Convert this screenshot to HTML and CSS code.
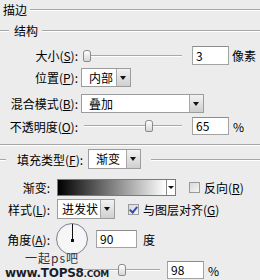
FILE: index.html
```html
<!DOCTYPE html>
<html>
<head>
  <meta charset="UTF-8">
  <title>描边</title>
  <link rel="stylesheet" href="styles.css">
</head>
<body>
  <div class="panel">
    <div class="legend top"><span>描边</span></div>
    <div class="legend sub"><span>结构</span></div>

    <div class="row r-size">
      <span class="lbl">大小(<u>S</u>):</span>
      <div class="slider"><div class="track"></div><div class="thumb" style="left: 1px"></div></div>
      <div class="field">3</div>
      <span class="unit">像素</span>
    </div>

    <div class="row r-pos">
      <span class="lbl">位置(<u>P</u>):</span>
      <div class="select w-pos"><div class="value">内部</div><div class="arrow"></div></div>
    </div>

    <div class="row r-blend">
      <span class="lbl">混合模式(<u>B</u>):</span>
      <div class="select w-blend"><div class="value">叠加</div><div class="arrow"></div></div>
    </div>

    <div class="row r-opacity">
      <span class="lbl">不透明度(<u>O</u>):</span>
      <div class="slider"><div class="track"></div><div class="thumb" style="left: 63px"></div></div>
      <div class="field">65</div>
      <span class="unit pct">%</span>
    </div>

    <div class="sep"></div>

    <div class="legend fill">
      <span class="fill-lbl">填充类型(<u>F</u>):</span>
      <div class="select w-fill"><div class="value">渐变</div><div class="arrow"></div></div>
    </div>

    <div class="row r-grad">
      <span class="lbl2">渐变:</span>
      <div class="gradient"><div class="ramp"></div><div class="mini-arrow"></div></div>
      <span class="check"></span>
      <span class="check-lbl">反向(<u>R</u>)</span>
    </div>

    <div class="row r-style">
      <span class="lbl2">样式(<u>L</u>):</span>
      <div class="select w-style"><div class="value">进发状</div><div class="arrow"></div></div>
      <span class="check on"></span>
      <span class="check-lbl">与图层对齐(<u>G</u>)</span>
    </div>

    <div class="row r-angle">
      <span class="lbl2">角度(<u>A</u>):</span>
      <div class="dial"><div class="hand"></div><div class="dot"></div></div>
      <div class="field w-angle">90</div>
      <span class="unit deg">度</span>
    </div>

    <div class="row r-scale">
      <span class="lbl2"></span>
      <div class="slider short"><div class="track"></div><div class="thumb" style="left: 61px"></div></div>
      <div class="field">98</div>
      <span class="unit pct">%</span>
    </div>

    <div class="mark-cn">一起ps吧</div>
    <div class="mark-en">www.TOPS8<span>.COM</span></div>
  </div>
</body>
</html>
```

FILE: styles.css
```css
body {
  margin: 0;
  background: #ececec;
  font-family: "Noto Sans CJK SC", "DejaVu Sans", sans-serif;
  font-size: 12px;
  color: #000;
}
.panel {
  position: relative;
  width: 260px;
  height: 280px;
  overflow: hidden;
}
u {
  text-decoration: underline;
  text-underline-offset: 1px;
}

/* group headers with etched lines */
.legend {
  display: flex;
  align-items: center;
}
.legend::after {
  content: "";
  flex: 1;
  height: 1px;
  background: #a6a6a6;
  box-shadow: 0 1px 0 #fff;
}
.legend.top {
  height: 18px;
  padding-left: 3px;
}
.legend.top span {
  margin-right: 3px;
}
.legend.sub {
  height: 24px;
}
.legend.sub::before,
.legend.fill::before {
  content: "";
  width: 9px;
  height: 1px;
  background: #a6a6a6;
  box-shadow: 0 1px 0 #fff;
  margin-right: 5px;
}
.legend.sub span {
  margin-right: 4px;
}

.row {
  display: flex;
  align-items: center;
}
.lbl {
  width: 78px;
  text-align: right;
  margin-right: 3px;
  white-space: nowrap;
}
.lbl2 {
  width: 50px;
  flex: none;
  text-align: right;
  margin-right: 7px;
  white-space: nowrap;
}

.r-size { margin-top: 4px; height: 19px; }
.r-pos { margin-top: 3px; height: 19px; }
.r-blend { margin-top: 7px; height: 19px; }
.r-opacity { margin-top: 4px; height: 18px; }
.r-grad { margin-top: 10px; height: 17px; }
.r-style { margin-top: 3px; height: 20px; }
.r-angle { margin-top: 2px; height: 36px; }
.r-scale { margin-top: 4px; height: 18px; }

/* slider */
.slider {
  position: relative;
  width: 100px;
  height: 14px;
  margin-left: 1px;
  margin-right: 10px;
}
.slider.short {
  width: 103px;
  margin-left: 0;
  margin-right: 7px;
}
.track {
  position: absolute;
  left: 2px;
  right: 0;
  top: 6px;
  height: 1px;
  background: #a8a8a8;
  box-shadow: 0 1px 0 #fff;
}
.thumb {
  position: absolute;
  top: 1px;
  width: 6px;
  height: 10px;
  border: 1px solid #8a8a8a;
  border-radius: 3px 3px 2px 2px;
  background: linear-gradient(#ffffff, #d6d6d6);
}

/* text fields */
.field {
  box-sizing: border-box;
  width: 37px;
  height: 18px;
  line-height: 16px;
  padding-left: 3px;
  background: #fff;
  border: 1px solid #a3a3a3;
  border-top-color: #8c8c8c;
}
.r-size .field {
  height: 19px;
  line-height: 17px;
}
.field.w-angle {
  width: 41px;
  margin-left: 8px;
}
.unit {
  margin-left: 3px;
}
.unit.pct {
  margin-left: 4px;
}
.unit.deg {
  margin-left: 6px;
}

/* drop-down */
.select {
  box-sizing: border-box;
  display: flex;
  height: 19px;
  border: 1px solid #9c9c9c;
  background: #fff;
}
.select .value {
  flex: 1;
  line-height: 17px;
  padding-left: 7px;
  white-space: nowrap;
}
.select .arrow {
  width: 13px;
  border-left: 1px solid #a8a8a8;
  background: linear-gradient(#f2f2f2, #cfcfcf) no-repeat;
  position: relative;
}
.select .arrow::after {
  content: "";
  position: absolute;
  left: 3px;
  top: 7px;
  border-top: 4px solid #111;
  border-left: 3.5px solid transparent;
  border-right: 3.5px solid transparent;
}
.w-pos { width: 50px; }
.w-blend { width: 123px; }
.w-fill {
  width: 53px;
  height: 20px;
  margin-left: 5px;
  margin-right: 10px;
}
.w-style {
  width: 58px;
  height: 20px;
}
.w-style .value {
  padding-left: 4px;
}
.w-fill .value,
.w-style .value {
  line-height: 18px;
}

.legend.fill {
  margin-top: 4px;
  height: 20px;
}
.legend.fill::before {
  width: 6px;
  margin-right: 11px;
}

.sep {
  margin-top: 9px;
  height: 1px;
  background: #a6a6a6;
  box-shadow: 0 1px 0 #fff;
}

/* gradient preview */
.gradient {
  box-sizing: border-box;
  display: flex;
  width: 119px;
  height: 17px;
  border: 1px solid #7a7a7a;
}
.ramp {
  flex: 1;
  background: linear-gradient(to right, #000, #fff);
}
.mini-arrow {
  width: 8px;
  background: #fff;
  border-left: 1px solid #8a8a8a;
  position: relative;
}
.mini-arrow::after {
  content: "";
  position: absolute;
  left: 1px;
  top: 6px;
  border-top: 3px solid #111;
  border-left: 3px solid transparent;
  border-right: 3px solid transparent;
}

/* checkboxes */
.check {
  box-sizing: border-box;
  width: 11px;
  height: 11px;
  margin-left: 13px;
  border: 1px solid #9a9a9a;
  background: linear-gradient(135deg, #d8d8d8, #f6f6f6);
  position: relative;
}
.check.on::after {
  content: "";
  position: absolute;
  left: 2px;
  top: 0px;
  width: 3px;
  height: 6px;
  border-right: 2px solid #2f4fb0;
  border-bottom: 2px solid #2f4fb0;
  transform: rotate(40deg);
}
.check-lbl {
  margin-left: 4px;
}

/* angle dial */
.dial {
  box-sizing: border-box;
  position: relative;
  width: 32px;
  height: 32px;
  margin-left: -1px;
  border: 1px solid #7d8494;
  border-radius: 50%;
  background: radial-gradient(circle at 50% 50%, #f6f6f6 60%, #dcdde2);
}
.hand {
  position: absolute;
  left: 15px;
  top: 0;
  width: 1px;
  height: 16px;
  background: #111;
}
.dot {
  position: absolute;
  left: 14px;
  top: 15px;
  width: 3px;
  height: 3px;
  background: #111;
}

/* watermark overlay */
.mark-cn {
  position: absolute;
  left: 25px;
  top: 249px;
  font-size: 12px;
  line-height: 17px;
  letter-spacing: 1px;
  color: #2c2d3c;
  text-shadow: 0 0 1px #fff;
}
.mark-en {
  position: absolute;
  left: 5px;
  top: 267px;
  font-family: "DejaVu Sans", sans-serif;
  font-weight: bold;
  font-size: 12px;
  line-height: 13px;
  letter-spacing: -0.3px;
  color: #1d1e2a;
  text-shadow: 0 0 1px #fff;
}
.mark-en span {
  font-size: 9px;
}
```
